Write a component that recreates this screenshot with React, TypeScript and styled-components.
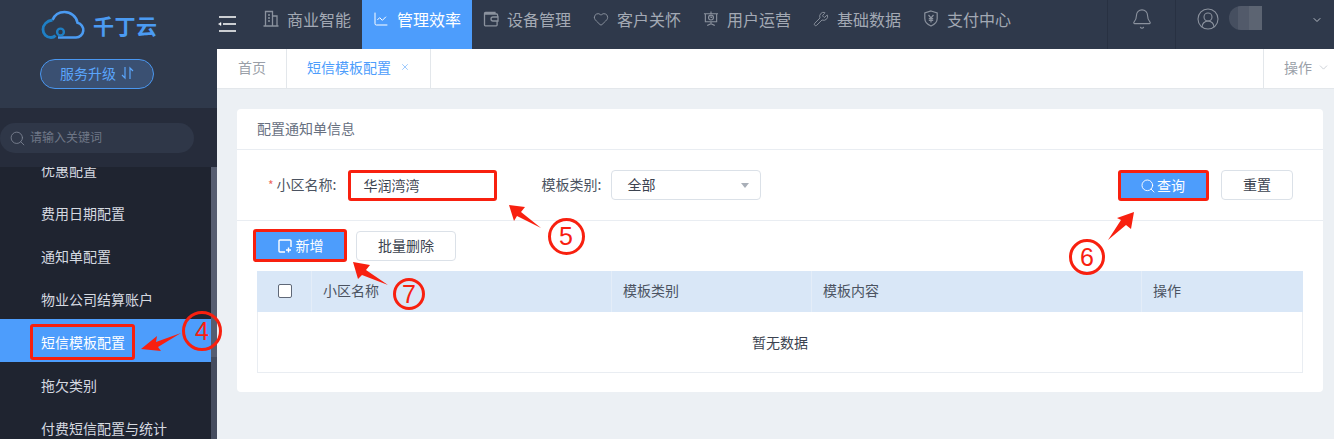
import React from "react";
import styled, { createGlobalStyle } from "styled-components";
import { Bell, ChartLine, ChevronDown, CircleUserRound, Heart, Search, Wrench, X } from "lucide-react";

const GlobalStyle = createGlobalStyle`
  html, body {
    margin: 0;
    padding: 0;
    overflow: hidden;
    background: #ecf0f4;
    font-family: "Noto Sans CJK SC", "Liberation Sans", sans-serif;
  }
  * { box-sizing: border-box; }
`;

const RED = "#f8200f";

const Page = styled.div`
  position: relative;
  width: 1334px;
  height: 439px;
  display: flex;
  overflow: hidden;
`;

const Sidebar = styled.aside`
  width: 217px;
  height: 439px;
  flex: none;
  display: flex;
  flex-direction: column;
  background: #1f2430;
`;

const Brand = styled.div`
  height: 108px;
  flex: none;
  background: #2f394b;
  display: flex;
  flex-direction: column;
  padding: 10px 0 0 41px;
`;

const LogoRow = styled.div`
  display: flex;
  align-items: center;
  gap: 8px;
  height: 30px;
`;

const LogoText = styled.span`
  font-size: 21px;
  line-height: 30px;
  font-weight: 700;
  letter-spacing: 0.5px;
  color: #4b9bf2;
`;

const UpgradeButton = styled.div`
  width: 114px;
  height: 30px;
  margin: 19px 0 0 -1px;
  padding-bottom: 3px;
  border: 1.5px solid #4a97f0;
  border-radius: 15px;
  background: #3a5072;
  color: #5aa5fb;
  font-size: 14px;
  display: flex;
  align-items: center;
  justify-content: center;
  gap: 5px;
`;

const SearchSection = styled.div`
  height: 59px;
  flex: none;
  background: #262c3b;
  padding-top: 15px;
`;

const SearchPill = styled.div`
  width: 194px;
  height: 30px;
  padding: 0 0 3px 9px;
  border-radius: 15px;
  background: #2f3748;
  color: #6f7787;
  font-size: 12px;
  display: flex;
  align-items: center;
  gap: 4px;
  svg { margin-top: 3px; }
`;

const MenuWrap = styled.div`
  flex: 1;
  display: flex;
  overflow: hidden;
`;

const MenuList = styled.div`
  width: 211px;
  margin-top: -20px;
`;

const MenuItem = styled.div<{ $active?: boolean }>`
  height: 43px;
  padding: 2px 0 0 41px;
  display: flex;
  align-items: center;
  font-size: 14px;
  color: ${(p) => (p.$active ? "#ffffff" : "#d5d9e0")};
  background: ${(p) => (p.$active ? "#4d9dfc" : "transparent")};
`;

const MarkedLabel = styled.span`
  position: relative;
  &::after {
    content: "";
    position: absolute;
    left: -11px;
    right: -10px;
    top: -8px;
    bottom: -8px;
    border: 3px solid ${RED};
    border-radius: 3px;
  }
`;

const ScrollTrack = styled.div`
  width: 6px;
  background: #454c5e;
`;

const ScrollThumb = styled.div`
  height: 190px;
  background: #565d70;
`;

const Main = styled.main`
  flex: 1;
  min-width: 0;
  display: flex;
  flex-direction: column;
`;

const TopBar = styled.header`
  height: 49px;
  flex: none;
  background: #2f394b;
  display: flex;
`;

const Hamburger = styled.div`
  width: 35px;
  padding: 13px 0 0 1px;
`;

const NavItem = styled.div<{ $active?: boolean }>`
  width: 110px;
  padding: 0 0 12px 11px;
  display: flex;
  align-items: center;
  gap: 8px;
  font-size: 16px;
  color: ${(p) => (p.$active ? "#ffffff" : "#a3a9b4")};
  background: ${(p) => (p.$active ? "#4d9dfc" : "transparent")};
  svg { color: ${(p) => (p.$active ? "#ffffff" : "#8b929e")}; flex: none; }
`;

const TopSpacer = styled.div`
  flex: 1;
`;

const BellCell = styled.div`
  width: 69px;
  border-left: 1px solid #283142;
  border-right: 1px solid #283142;
  display: flex;
  justify-content: center;
  padding: 8px 0 0 1px;
  color: #8b929e;
`;

const UserCell = styled.div`
  width: 158px;
  display: flex;
  padding: 7px 0 0 20px;
  color: #8b929e;
`;

const BlurName = styled.div`
  width: 33px;
  height: 24px;
  margin: -1px 0 0 9px;
  border-radius: 12px 0 0 12px;
  background:
    linear-gradient(90deg, #464f60 0 28%, #525a6a 28% 62%, #5c6472 62%);
`;

const UserChevron = styled.div`
  display: flex;
  margin: 7px 0 0 49px;
`;

const TabBar = styled.nav`
  height: 40px;
  flex: none;
  background: #ffffff;
  border-bottom: 1px solid #e3e7eb;
  display: flex;
  padding-left: 1px;
  font-size: 14px;
`;

const Tab = styled.div<{ $active?: boolean }>`
  padding: 0 20px 3px;
  display: flex;
  align-items: center;
  gap: 9px;
  border-right: 1px solid #e3e7eb;
  color: ${(p) => (p.$active ? "#4d9dfc" : "#9a9fa8")};
`;

const TabSpacer = styled.div`
  flex: 1;
`;

const TabAction = styled.div`
  width: 71px;
  padding: 0 0 3px 20px;
  border-left: 1px solid #e3e7eb;
  display: flex;
  align-items: center;
  gap: 5px;
  color: #9a9fa8;
`;

const Content = styled.div`
  flex: 1;
  padding: 20px 11px 0 20px;
  background: #ecf0f4;
`;

const Card = styled.section`
  height: 283px;
  background: #ffffff;
  border-radius: 4px;
`;

const CardHeader = styled.div`
  height: 41px;
  border-bottom: 1px solid #e9edf2;
  padding: 0 0 2px 20px;
  display: flex;
  align-items: center;
  font-size: 14px;
  color: #67707f;
`;

const FilterRow = styled.div`
  height: 71px;
  border-bottom: 1px solid #e9edf2;
  padding: 20px 30px 0 31px;
  display: flex;
  font-size: 14px;
  color: #4b5361;
`;

const Label = styled.label`
  height: 30px;
  padding-bottom: 2px;
  display: flex;
  align-items: center;
  white-space: nowrap;
`;

const Star = styled.span`
  color: #ee6a5f;
  margin-right: 3px;
  font-size: 12px;
`;

const NameInput = styled.div`
  width: 149px;
  height: 31px;
  margin: 0 45px 0 11px;
  padding: 0 0 2px 13px;
  border: 3px solid ${RED};
  border-radius: 3px;
  display: flex;
  align-items: center;
  color: #3c4350;
`;

const SelectBox = styled.div`
  width: 150px;
  height: 30px;
  margin-left: 10px;
  padding: 0 16px 2px 15px;
  border: 1px solid #dbe1e8;
  border-radius: 4px;
  display: flex;
  align-items: center;
  justify-content: space-between;
  color: #3c4350;
`;

const Caret = styled.span`
  width: 0;
  height: 0;
  margin: 2px -5px 0 0;
  border-left: 4px solid transparent;
  border-right: 4px solid transparent;
  border-top: 5px solid #a9afb8;
`;

const FilterSpacer = styled.div`
  flex: 1;
`;

const Button = styled.button<{ $primary?: boolean; $width: number }>`
  width: ${(p) => p.$width}px;
  height: 30px;
  display: flex;
  align-items: center;
  justify-content: center;
  gap: 4px;
  padding: 0 0 2px;
  font: inherit;
  font-size: 14px;
  border-radius: 4px;
  color: ${(p) => (p.$primary ? "#ffffff" : "#3c4350")};
  background: ${(p) => (p.$primary ? "#4d9dfc" : "#ffffff")};
  border: 1px solid ${(p) => (p.$primary ? "#4d9dfc" : "#dbe1e8")};
  svg { margin-top: 2px; }
`;

const MarkedButton = styled(Button)`
  border: 3px solid ${RED};
  border-radius: 3px;
`;

const QueryButton = styled(MarkedButton)`
  height: 31px;
  margin-right: 12px;
  padding-right: 2px;
  gap: 1px;
`;

const AddButton = styled(MarkedButton)`
  height: 33px;
  margin: -2px 0 0 -4px;
  padding-left: 1px;
`;

const ActionRow = styled.div`
  height: 50px;
  padding: 10px 0 0 20px;
  display: flex;
  gap: 9px;
`;

const Table = styled.div`
  margin: 0 20px;
  border: solid #e9edf2;
  border-width: 0 1px 1px;
  font-size: 14px;
  color: #4b5361;
`;

const HeadRow = styled.div`
  height: 41px;
  background: #d9e7f7;
  display: grid;
  grid-template-columns: 55px 300px 200px 330px 1fr;
  margin: 0 -1px;
`;

const HeadCell = styled.div`
  display: flex;
  align-items: center;
  padding: 0 0 3px 11px;
  border-right: 1px solid #e4edf8;
  &:last-child { border-right: none; }
`;

const CheckCell = styled(HeadCell)`
  justify-content: center;
  padding: 0 0 1px 1px;
`;

const Checkbox = styled.span`
  width: 14px;
  height: 14px;
  border: 1px solid #5f6877;
  border-radius: 2px;
  background: #ffffff;
`;

const EmptyRow = styled.div`
  height: 60px;
  display: flex;
  align-items: center;
  justify-content: center;
  font-size: 14px;
  color: #3c4350;
`;

/* hand drawn callouts over the screenshot */
const CalloutLayer = styled.svg`
  position: absolute;
  inset: 0;
  pointer-events: none;
`;

const Step = styled.div<{ $x: number; $y: number; $size: number }>`
  position: absolute;
  left: ${(p) => p.$x - p.$size / 2}px;
  top: ${(p) => p.$y - p.$size / 2}px;
  width: ${(p) => p.$size}px;
  height: ${(p) => p.$size}px;
  border: 3px solid ${RED};
  border-radius: 50%;
  display: flex;
  align-items: center;
  justify-content: center;
  color: ${RED};
  font-family: "Liberation Sans", sans-serif;
  font-size: 25px;
  background: transparent;
`;

const BuildingIcon = () => (
  <svg width="16" height="17" viewBox="0 0 16 17" fill="none" stroke="currentColor" strokeWidth="1.3">
    <path d="M0.500 16h15M2.500 16V1.500h7V16M9.500 6h4.500v10M5 5h2M5 8h2M5 11h2" />
  </svg>
);

const WalletIcon = () => (
  <svg width="16" height="16" viewBox="0 0 16 16" fill="none" stroke="currentColor" strokeWidth="1.3">
    <path d="M12 3V1.500H2.500a1 1 0 0 0-1 1V14a.8.8 0 0 0 .8.8h11a.8.8 0 0 0 .8-.8V10M14.600 6V4a1 1 0 0 0-1-1H2" />
    <path d="M10 6h5v4h-5a2 2 0 0 1 0-4z" />
  </svg>
);

const BoardIcon = () => (
  <svg width="16" height="17" viewBox="0 0 17 17" fill="none" stroke="currentColor" strokeWidth="1.2">
    <path d="M1 3.500h15M2.500 3.500v8.500h12V3.500M8.500 1v2.500M8.500 12v2M4.500 16l4-2 4 2" />
    <circle cx="8.500" cy="7.500" r="2.600" />
    <path d="M8.500 6v1.500h1.300" />
  </svg>
);

const ShieldIcon = () => (
  <svg width="16" height="17" viewBox="0 0 16 17" fill="none" stroke="currentColor" strokeWidth="1.2">
    <path d="M8 1l6.200 2v5.500c0 3.600-2.800 6-6.200 7.500-3.400-1.500-6.200-3.900-6.200-7.500V3z" />
    <path d="M5.500 5L8 8l2.500-3M8 8v4.500M5.800 8.600h4.400M5.800 10.400h4.400" />
  </svg>
);

const AddIcon = () => (
  <svg width="14" height="14" viewBox="0 0 14 14" fill="none" stroke="#ffffff" strokeWidth="1.400">
    <path d="M7 13H2a1 1 0 0 1-1-1V2a1 1 0 0 1 1-1h10a1 1 0 0 1 1 1v6" />
    <path d="M10.500 8.500v5M8 11h5" />
  </svg>
);

const CloudLogo = () => (
  <svg width="44" height="30" viewBox="0 0 44 30">
    <path
      d="M17 27.500h18a7.500 7.500 0 0 0 1.500-14.800C35.500 6.500 29.500 2 23.500 2c-5.500 0-10 3-12 8"
      fill="none"
      stroke="#4b9bf2"
      strokeWidth="2.600"
    />
    <path
      d="M11.500 10C5.500 11 2 15 2 19.500c0 4.500 3.500 8 8 8 2 0 3.500-.8 4.500-2"
      fill="none"
      stroke="#1f7fc4"
      strokeWidth="2.800"
    />
    <circle cx="19.500" cy="22" r="3.400" fill="none" stroke="#1f7fc4" strokeWidth="2.400" />
  </svg>
);

const arrows = [
  "M141 349 L157 336 L156 342 L181 333 L158 347 L161 351 Z",
  "M509 205 L525 207 L521 212 L541 228 L517 216 L514 221 Z",
  "M1134 212 L1131 229 L1126 225 L1108 240 L1121 220 L1117 218 Z",
  "M353 262 L370 265 L366 270 L388 285 L362 275 L358 279 Z",
];

const steps = [
  { n: 4, x: 202, y: 331, size: 40 },
  { n: 5, x: 566, y: 236, size: 37 },
  { n: 6, x: 1087, y: 257, size: 36 },
  { n: 7, x: 409, y: 294, size: 32 },
];

const menu = ["优惠配置", "费用日期配置", "通知单配置", "物业公司结算账户", "短信模板配置", "拖欠类别", "付费短信配置与统计"];

function App() {
  return (
    <>
      <GlobalStyle />
      <Page>
        <Sidebar>
          <Brand>
            <LogoRow>
              <CloudLogo />
              <LogoText>千丁云</LogoText>
            </LogoRow>
            <UpgradeButton>
              服务升级
              <svg width="13" height="14" viewBox="0 0 13 14" fill="none" stroke="currentColor" strokeWidth="1.2">
                <path d="M4 1v11L1 9M9 13V2l3 3" />
              </svg>
            </UpgradeButton>
          </Brand>
          <SearchSection>
            <SearchPill>
              <Search size={17} strokeWidth={1.2} color="#7d8494" />
              请输入关键词
            </SearchPill>
          </SearchSection>
          <MenuWrap>
            <MenuList>
              {menu.map((name) => (
                <MenuItem key={name} $active={name === "短信模板配置"}>
                  {name === "短信模板配置" ? <MarkedLabel>{name}</MarkedLabel> : name}
                </MenuItem>
              ))}
            </MenuList>
            <ScrollTrack>
              <ScrollThumb />
            </ScrollTrack>
          </MenuWrap>
        </Sidebar>
        <Main>
          <TopBar>
            <Hamburger>
              <svg width="18" height="16" viewBox="0 0 18 16" stroke="#ffffff" strokeWidth="1.6">
                <path d="M1 1h17M5 8h13M1 15h17" />
                <path d="M0.500 8L3 6.500v3z" fill="#ffffff" strokeWidth="0.500" />
              </svg>
            </Hamburger>
            <NavItem><BuildingIcon />商业智能</NavItem>
            <NavItem $active><ChartLine size={16} strokeWidth={1.5} />管理效率</NavItem>
            <NavItem><WalletIcon />设备管理</NavItem>
            <NavItem><Heart size={16} strokeWidth={1.4} />客户关怀</NavItem>
            <NavItem><BoardIcon />用户运营</NavItem>
            <NavItem><Wrench size={16} strokeWidth={1.4} />基础数据</NavItem>
            <NavItem><ShieldIcon />支付中心</NavItem>
            <TopSpacer />
            <BellCell><Bell size={22} strokeWidth={1.2} /></BellCell>
            <UserCell>
              <CircleUserRound size={24} strokeWidth={1.1} />
              <BlurName />
              <UserChevron><ChevronDown size={12} color="#b4b9c2" /></UserChevron>
            </UserCell>
          </TopBar>
          <TabBar>
            <Tab>首页</Tab>
            <Tab $active>短信模板配置<X size={10} strokeWidth={1.3} /></Tab>
            <TabSpacer />
            <TabAction>操作<ChevronDown size={13} strokeWidth={1.2} color="#b4b9c2" /></TabAction>
          </TabBar>
          <Content>
            <Card>
              <CardHeader>配置通知单信息</CardHeader>
              <FilterRow>
                <Label><Star>*</Star>小区名称:</Label>
                <NameInput>华润湾湾</NameInput>
                <Label>模板类别:</Label>
                <SelectBox>全部<Caret /></SelectBox>
                <FilterSpacer />
                <QueryButton $primary $width={91}>
                  <Search size={16} strokeWidth={1.4} />查询
                </QueryButton>
                <Button $width={72}>重置</Button>
              </FilterRow>
              <ActionRow>
                <AddButton $primary $width={94}><AddIcon />新增</AddButton>
                <Button $width={100}>批量删除</Button>
              </ActionRow>
              <Table>
                <HeadRow>
                  <CheckCell><Checkbox /></CheckCell>
                  <HeadCell>小区名称</HeadCell>
                  <HeadCell>模板类别</HeadCell>
                  <HeadCell>模板内容</HeadCell>
                  <HeadCell>操作</HeadCell>
                </HeadRow>
                <EmptyRow>暂无数据</EmptyRow>
              </Table>
            </Card>
          </Content>
        </Main>
        <CalloutLayer width="1334" height="439">
          {arrows.map((d) => (
            <path key={d} d={d} fill={RED} />
          ))}
        </CalloutLayer>
        {steps.map((s) => (
          <Step key={s.n} $x={s.x} $y={s.y} $size={s.size}>{s.n}</Step>
        ))}
      </Page>
    </>
  );
}

export default App;
